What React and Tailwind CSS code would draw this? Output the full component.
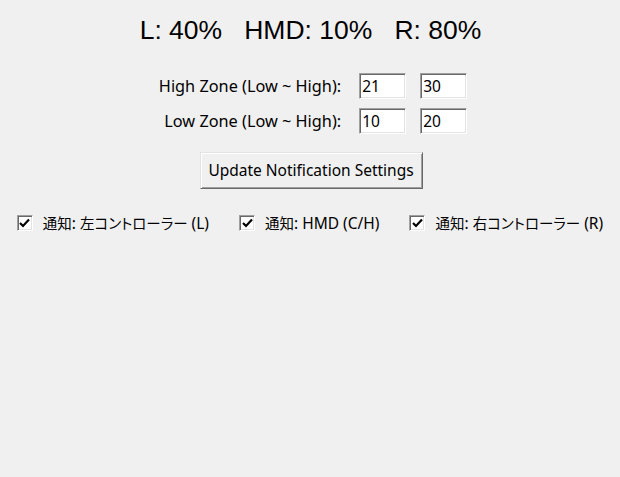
import { useState } from "react";

const uiFont = {
  fontFamily: '"Noto Sans", "Noto Sans CJK JP", sans-serif',
};

// classic sunken/raised win32 look
const entryClass =
  "w-[47px] h-[26px] bg-white border border-t-[#a0a0a0] border-l-[#a0a0a0] border-b-white border-r-white shadow-[inset_1px_1px_0_#696969,inset_-1px_-1px_0_#e3e3e3] px-[2px] text-[15.5px] text-black outline-none";

const Jp = ({ children }) => (
  <span
    className="text-[14.5px] [font-feature-settings:'palt']"
    style={{ fontFamily: '"Noto Sans CJK JP", sans-serif' }}
  >
    {children}
  </span>
);

const Check = ({ checked, onClick, children }) => (
  <label className="flex items-center gap-[10px] cursor-default select-none" onClick={onClick}>
    <span className="w-[16px] h-[16px] bg-white border border-t-[#a0a0a0] border-l-[#a0a0a0] border-b-white border-r-white shadow-[inset_1px_1px_0_#696969,inset_-1px_-1px_0_#e3e3e3] flex items-center justify-center">
      {checked && (
        <svg width="11" height="10" viewBox="0 0 11 10">
          <path d="M1 5 L4 8 L10 1.5" fill="none" stroke="#000" strokeWidth="2.2" />
        </svg>
      )}
    </span>
    <span className="text-[15.5px] text-black leading-[16px] whitespace-nowrap">{children}</span>
  </label>
);

const App = () => {
  const [zones, setZones] = useState({
    highLow: "21",
    highHigh: "30",
    lowLow: "10",
    lowHigh: "20",
  });

  const [notify, setNotify] = useState({ L: true, H: true, R: true });

  const handleChange = (e) => {
    const { name, value } = e.target;
    setZones((prev) => ({ ...prev, [name]: value }));
  };

  const toggle = (key) => (e) => {
    e.preventDefault();
    setNotify((prev) => ({ ...prev, [key]: !prev[key] }));
  };

  return (
    <div className="w-[620px] h-[477px] bg-[#f0f0f0] overflow-hidden" style={uiFont}>
      {/* battery levels */}
      <div
        className="pt-[15px] h-[45px] pl-[1px] text-center text-[26.5px] leading-[30px] text-black whitespace-pre"
        style={{ fontFamily: '"Liberation Sans", Arial, sans-serif' }}
      >
        L: 40%   HMD: 10%   R: 80%
      </div>

      {/* zone settings */}
      <div className="mt-[28px] flex justify-center pl-[6px]">
        <div className="grid grid-cols-[auto_47px_47px] gap-x-[14px] gap-y-[9px] items-center">
          <span className="text-[16.3px] text-black text-right pr-[4px]">High Zone (Low ~ High):</span>
          <input name="highLow" value={zones.highLow} onChange={handleChange} className={entryClass} />
          <input name="highHigh" value={zones.highHigh} onChange={handleChange} className={entryClass} />

          <span className="text-[16.3px] text-black text-right pr-[4px]">Low Zone (Low ~ High):</span>
          <input name="lowLow" value={zones.lowLow} onChange={handleChange} className={entryClass} />
          <input name="lowHigh" value={zones.lowHigh} onChange={handleChange} className={entryClass} />
        </div>
      </div>

      <div className="mt-[18px] flex justify-center pl-[2px]">
        <button className="w-[223px] h-[37px] bg-[#f0f0f0] border border-t-[#e3e3e3] border-l-[#e3e3e3] border-b-[#696969] border-r-[#696969] shadow-[inset_1px_1px_0_#ffffff,inset_-1px_-1px_0_#a0a0a0] text-[15.5px] text-black">
          Update Notification Settings
        </button>
      </div>

      {/* notification toggles */}
      <div className="mt-[26px] flex justify-center gap-[30px]">
        <Check checked={notify.L} onClick={toggle("L")}>
          <Jp>通知</Jp>: <Jp>左コントローラー</Jp> (L)
        </Check>
        <Check checked={notify.H} onClick={toggle("H")}>
          <Jp>通知</Jp>: HMD (C/H)
        </Check>
        <Check checked={notify.R} onClick={toggle("R")}>
          <Jp>通知</Jp>: <Jp>右コントローラー</Jp> (R)
        </Check>
      </div>
    </div>
  );
};

export default App;
